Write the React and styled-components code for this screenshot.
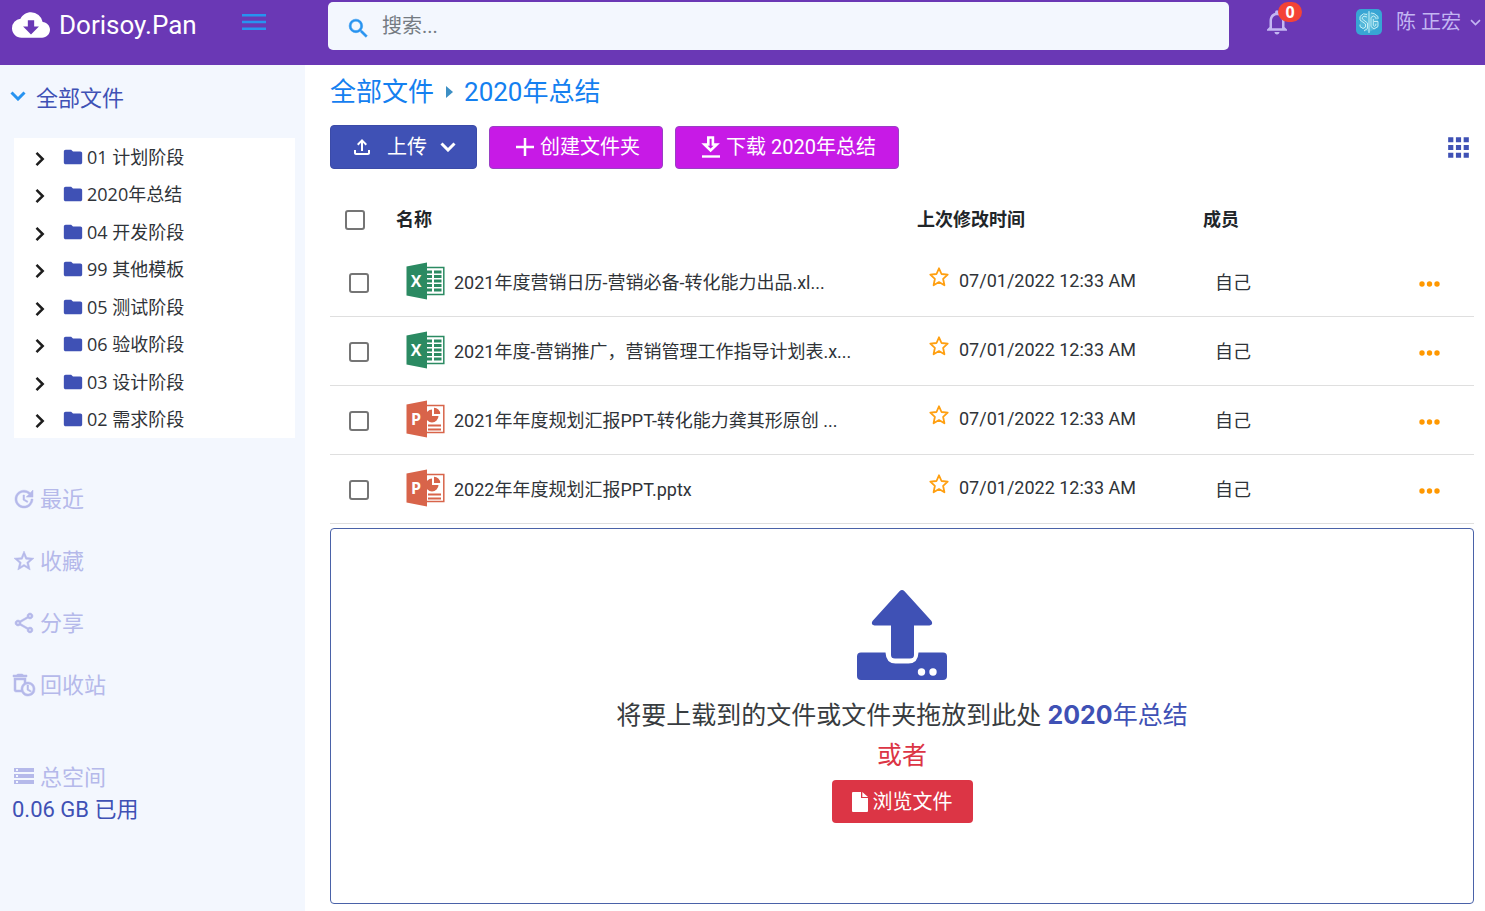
import React from 'react';
import styled, { createGlobalStyle } from 'styled-components';
import {
  MdCloudDownload,
  MdSearch,
  MdNotificationsNone,
  MdUpdate,
  MdStarBorder,
  MdOutlineShare,
  MdOutlineAutoDelete,
  MdStorage,
  MdApps,
  MdFolder,
  MdOutlineFileUpload,
} from 'react-icons/md';

const indigo = '#3f51b5';
const faded = '#b5b9ea';
const blue = '#2793f0';

const GlobalStyle = createGlobalStyle`
  *, *::before, *::after { box-sizing: border-box; }
  body {
    margin: 0;
    background: #fff;
    color: #2f3338;
    font-family: Roboto, "Noto Sans CJK SC", sans-serif;
    font-size: 18px;
  }
  button, input { font: inherit; color: inherit; }
  button { border: 0; background: none; padding: 0; cursor: pointer; }
  a { color: inherit; text-decoration: none; }
  ul, ol { list-style: none; margin: 0; padding: 0; }
  svg { display: block; flex: none; }
`;

const Page = styled.div`
  min-height: 100vh;
  display: flex;
  flex-direction: column;
`;

const Header = styled.header`
  height: 65px;
  display: flex;
  align-items: flex-start;
  background: #6a38b5;
`;

const BrandArea = styled.div`
  flex: none;
  width: 328px;
  height: 50px;
  padding: 0 62px 0 12px;
  display: flex;
  align-items: center;
  justify-content: space-between;
`;

const Brand = styled.a`
  display: flex;
  align-items: center;
  gap: 9px;
  color: #fff;
  font-size: 26px;
  line-height: 48px;
`;

const MenuButton = styled.button`
  color: ${blue};
  padding-bottom: 6px;
`;

const SearchBox = styled.label`
  flex: 1;
  min-width: 0;
  height: 48px;
  margin-top: 2px;
  padding: 0 18px;
  display: flex;
  align-items: center;
  gap: 9px;
  background: #f3f7fe;
  border-radius: 5px;
  color: ${blue};
  svg {
    margin-top: 4px;
    stroke: none;
  }
  path:not([fill='none']) {
    stroke: currentColor;
    stroke-width: 0.5px;
  }
`;

const SearchInput = styled.input`
  flex: 1;
  min-width: 0;
  height: 44px;
  border: 0;
  outline: 0;
  background: transparent;
  color: #333;
  font-size: 20px;
  &::placeholder { color: #757b82; opacity: 1; }
`;

const HeaderTools = styled.div`
  flex: none;
  width: 256px;
  height: 44px;
  padding: 0 4px 0 33px;
  display: flex;
  align-items: center;
  justify-content: space-between;
  color: #c3b6f2;
`;

const BellButton = styled.button`
  position: relative;
`;

const Badge = styled.span`
  position: absolute;
  top: -5px;
  left: 16px;
  width: 24px;
  height: 20px;
  border-radius: 10px;
  background: #f44336;
  color: #fff;
  font-family: "Open Sans", sans-serif;
  font-size: 16px;
  font-weight: 700;
  line-height: 20px;
  text-align: center;
`;

const UserButton = styled.button`
  display: flex;
  align-items: center;
  gap: 14px;
  font-size: 20px;
  line-height: 28px;
`;

const UserName = styled.span`
  display: flex;
  align-items: center;
  gap: 9px;
`;

const Body = styled.div`
  flex: 1;
  display: flex;
`;

const Sidebar = styled.aside`
  flex: none;
  width: 305px;
  background: #f3f7fe;
`;

const TreeTitle = styled.button`
  width: 100%;
  height: 61px;
  margin-bottom: 12px;
  padding-left: 10px;
  display: flex;
  align-items: center;
  gap: 10px;
  color: ${indigo};
  font-size: 22px;
  svg { color: ${blue}; }
`;

const Tree = styled.ul`
  min-height: 300px;
  margin: 0 10px 0 14px;
  display: grid;
  grid-auto-rows: 1fr;
  background: #fff;
`;

const TreeItem = styled.li`
  padding-left: 20px;
  display: flex;
  align-items: center;
  gap: 16px;
  font-family: "Open Sans", "Noto Sans CJK SC", sans-serif;
`;

const TreeToggle = styled.button`
  color: #1d1d1d;
  padding-top: 4px;
`;

const TreeLink = styled.a`
  display: flex;
  align-items: center;
  gap: 3px;
  line-height: 24px;
  svg { color: ${indigo}; }
`;

const SideNav = styled.nav`
  margin: 31px 0 44px;
`;

const SideLink = styled.a`
  height: ${(p) => p.$height}px;
  padding-left: 12px;
  display: flex;
  align-items: center;
  gap: 4px;
  color: ${faded};
  font-size: 22px;
  line-height: 32px;
  svg {
    margin-bottom: 3px;
    stroke: none;
  }
  path:not([fill='none']) {
    stroke: currentColor;
    stroke-width: ${(p) => (p.$solid ? 0 : '0.5px')};
  }
`;

const UsedSpace = styled.p`
  margin: 0;
  padding-left: 12px;
  color: ${indigo};
  font-size: 22px;
  line-height: 32px;
`;

const Main = styled.main`
  flex: 1;
  min-width: 0;
  padding: 7px 11px 7px 25px;
  display: flex;
  flex-direction: column;
`;

const Breadcrumb = styled.ol`
  display: flex;
  align-items: center;
  gap: 11px;
  color: #1480f0;
  font-size: 26px;
  line-height: 40px;
`;

const Toolbar = styled.div`
  height: 44px;
  margin: 13px 0 21px;
  display: flex;
  align-items: center;
  gap: 12px;
`;

const ToolButton = styled.button`
  height: ${(p) => (p.$primary ? 44 : 43)}px;
  padding: ${(p) => (p.$primary ? '0 20px 0 19px' : '0 22px 0 25px')};
  display: flex;
  align-items: center;
  gap: ${(p) => (p.$primary ? 13 : 5)}px;
  border: 1px solid ${(p) => (p.$primary ? '#3b4ba8' : '#9a3fc4')};
  border-radius: 4px;
  background: ${(p) => (p.$primary ? indigo : '#c71ae6')};
  color: #fff;
  font-size: 20px;
  line-height: 28px;
`;

const GridToggle = styled.button`
  margin-left: auto;
  color: ${indigo};
`;

const FileTable = styled.table`
  width: 100%;
  table-layout: fixed;
  border-collapse: separate;
  border-spacing: 0;
`;

const HeadCell = styled.th`
  width: ${(p) => p.$width || 'auto'};
  height: 58px;
  padding: 0 0 3px ${(p) => p.$indent || 0}px;
  text-align: left;
  font-weight: 700;
  color: #212529;
`;

const Cell = styled.td`
  height: 69px;
  padding: 0 0 3px ${(p) => p.$indent}px;
  border-bottom: 1px solid #dfdfdf;
`;

const Check = styled.input`
  appearance: none;
  display: block;
  width: 20px;
  height: 20px;
  margin: 5px 0 0;
  border: 2px solid #757575;
  border-radius: 3px;
  background: #fff;
`;

const CellLine = styled.div`
  display: flex;
  align-items: center;
  gap: ${(p) => p.$gap}px;
  white-space: nowrap;
  overflow: hidden;
`;

const StarButton = styled.button`
  padding-bottom: 8px;
  color: #ff9f10;
`;

const MoreButton = styled.button`
  display: block;
  padding-top: 7px;
  color: #ff9800;
`;

const DropZone = styled.section`
  flex: 1;
  margin-top: 4px;
  padding: 61px 16px 80px;
  display: flex;
  flex-direction: column;
  align-items: center;
  border: 1px solid #4a62a8;
  border-radius: 4px;
  font-size: 25px;
  line-height: 40px;
  text-align: center;
`;

const DropText = styled.p`
  margin: ${(p) => (p.$first ? '15px 0 0' : 0)};
  color: ${(p) => (p.$first ? '#383c40' : '#dc3545')};
`;

const FolderName = styled.span`
  color: ${indigo};
  b { font-family: Inter, sans-serif; }
`;

const BrowseButton = styled.button`
  height: 43px;
  margin-top: 4px;
  padding: 0 20px;
  display: flex;
  align-items: center;
  gap: 5px;
  border-radius: 4px;
  background: #dc3545;
  color: #fff;
  font-size: 20px;
  line-height: 28px;
`;

const Chevron = ({ width = 16, height = 10, stroke = 3 }) => (
  <svg width={width} height={height} viewBox="0 0 16 10" fill="none" stroke="currentColor" strokeWidth={stroke}>
    <path d="M1.500 1.500 8 8l6.500-6.500" />
  </svg>
);

const ChevronRight = () => (
  <svg width="12" height="16" viewBox="0 0 12 16" fill="none" stroke="currentColor" strokeWidth="2.500">
    <path d="m2.500 1.800 6.200 6.200-6.200 6.200" />
  </svg>
);

const MenuIcon = () => (
  <svg width="24" height="16" viewBox="0 0 24 16" fill="currentColor">
    <path d="M0 0h24v2.600H0zM0 6.700h24v2.600H0zM0 13.400h24V16H0z" />
  </svg>
);

const PlusIcon = () => (
  <svg width="20" height="20" viewBox="0 0 20 20" stroke="currentColor" strokeWidth="2.500">
    <path d="M10 1v18M1 10h18" />
  </svg>
);

const DownloadIcon = () => (
  <svg width="20" height="22" viewBox="0 0 20 22" fill="none" stroke="currentColor">
    <path strokeWidth="2.600" d="M7.300 1.500h4.600v7h3.800L9.600 14.500 3.500 8.500h3.800z" />
    <path strokeWidth="2.400" d="M1 20.500h18" />
  </svg>
);

const StarIcon = () => (
  <svg width="20" height="20" viewBox="0 0 20 20" fill="none" stroke="currentColor" strokeWidth="1.800" strokeLinejoin="round">
    <path d="m10 1.300 2.500 5.700 6.200.7-4.600 4.100 1.300 6.500-5.400-3.200-5.400 3.200 1.300-6.500L1.300 7.700l6.200-.7z" />
  </svg>
);

const DotsIcon = () => (
  <svg width="21" height="6" viewBox="0 0 21 6" fill="currentColor">
    <circle cx="3" cy="3" r="2.700" />
    <circle cx="10.500" cy="3" r="2.700" />
    <circle cx="18" cy="3" r="2.700" />
  </svg>
);

const FileIcon = () => (
  <svg width="16" height="20" viewBox="0 0 16 20" fill="currentColor">
    <path d="M1 0h8v6h7v13a1 1 0 0 1-1 1H1a1 1 0 0 1-1-1V1a1 1 0 0 1 1-1z" />
    <path d="M10.300 0 16 4.900h-5.700z" />
  </svg>
);

const UploadTrayIcon = () => (
  <svg width="90" height="90" viewBox="0 0 90 90" fill={indigo}>
    <path d="M42.500 1.200q2.500-2.400 5 0L74.500 31q2 4-2 4.500H57V65q0 3.500-4 3.500H38q-4 0-4-3.500V35.500H17.500q-4-.5-2-4.500z" />
    <path d="M4 62.500h24.500q.5 11 10 11h13q9.500 0 10-11H86a4 4 0 0 1 4 4V86a4 4 0 0 1-4 4H4a4 4 0 0 1-4-4V66.500a4 4 0 0 1 4-4z" />
    <circle cx="64.500" cy="82" r="3.700" fill="#fff" />
    <circle cx="76" cy="82" r="3.700" fill="#fff" />
  </svg>
);

const Avatar = () => (
  <svg width="26" height="26" viewBox="0 0 26 26" fill="none" stroke="#c4eef6" strokeWidth="1">
    <rect width="26" height="26" rx="5" fill="#38a5d4" stroke="none" />
    <path d="M13 3 22 7.500v11L13 23l-9-4.500v-11z" fill="#55b8da" stroke="none" />
    <path d="M13 2v22M11 5.500 7.500 4.800 4 7.500v3.500l5.500 4v3L7 19.500 4 17.500v-2M11 8 8 7.200 6.300 8.500v1.500l5.200 4v5.500L8 22M15 4l3 .5L22 7.500v2.500M20 10V8.500L17.500 7 15 8.500v9l3 2.500 4-2.500v-5h-4M17.300 10v6.500l1.200.8 1.300-1v-1.500" />
  </svg>
);

const OfficeIcon = ({ kind }) => {
  const excel = kind === 'xlsx';
  const color = excel ? '#2b8a62' : '#d8644a';
  return (
    <svg width="39" height="38" viewBox="0 0 39 38">
      <rect x="20" y="5.500" width="17.800" height="27" fill="#fff" stroke={color} strokeWidth="1.500" />
      {excel ? (
        <path
          fill={color}
          d="M21 8.500h5v3h-5zM28 8.500h7.500v3H28zM21 13h5v3h-5zM28 13h7.500v3H28zM21 17.500h5v3h-5zM28 17.500h7.500v3H28zM21 22h5v3h-5zM28 22h7.500v3H28zM21 26.500h5v3h-5zM28 26.500h7.500v3H28z"
        />
      ) : (
        <>
          <path fill={color} d="M26 9.500v6.500h6.500A6.500 6.500 0 1 1 26 9.500z" />
          <path fill={color} d="M28 7.800a6.200 6.200 0 0 1 6.200 6.200H28zM22 24.500h13v2H22zM22 28.500h13v2H22z" />
        </>
      )}
      <path fill={color} d="M.500 4.500 21 .5v37L.5 33.500z" />
      <text
        x="10"
        y="25"
        textAnchor="middle"
        fill="#fff"
        fontFamily="Open Sans, sans-serif"
        fontWeight="700"
        fontSize="16"
      >
        {excel ? 'X' : 'P'}
      </text>
    </svg>
  );
};

const folders = [
  '01 计划阶段',
  '2020年总结',
  '04 开发阶段',
  '99 其他模板',
  '05 测试阶段',
  '06 验收阶段',
  '03 设计阶段',
  '02 需求阶段',
];

const links = [
  { label: '最近', Icon: MdUpdate },
  { label: '收藏', Icon: MdStarBorder },
  { label: '分享', Icon: MdOutlineShare },
  { label: '回收站', Icon: MdOutlineAutoDelete },
];

const files = [
  { name: '2021年度营销日历-营销必备-转化能力出品.xl...', kind: 'xlsx' },
  { name: '2021年度-营销推广，营销管理工作指导计划表.x...', kind: 'xlsx' },
  { name: '2021年年度规划汇报PPT-转化能力龚其形原创 ...', kind: 'pptx' },
  { name: '2022年年度规划汇报PPT.pptx', kind: 'pptx' },
];

export default function App() {
  return (
    <Page>
      <GlobalStyle />
      <Header>
        <BrandArea>
          <Brand href="#">
            <MdCloudDownload size={38} />
            Dorisoy.Pan
          </Brand>
          <MenuButton aria-label="菜单">
            <MenuIcon />
          </MenuButton>
        </BrandArea>
        <SearchBox>
          <MdSearch size={25} />
          <SearchInput type="text" placeholder="搜索..." aria-label="搜索" />
        </SearchBox>
        <HeaderTools>
          <BellButton aria-label="通知">
            <MdNotificationsNone size={30} />
            <Badge>0</Badge>
          </BellButton>
          <UserButton>
            <Avatar />
            <UserName>
              陈 正宏
              <Chevron width={11} height={7} stroke={2.4} />
            </UserName>
          </UserButton>
        </HeaderTools>
      </Header>
      <Body>
        <Sidebar>
          <TreeTitle>
            <Chevron />
            全部文件
          </TreeTitle>
          <Tree>
            {folders.map((name) => (
              <TreeItem key={name}>
                <TreeToggle aria-label={`展开 ${name}`}>
                  <ChevronRight />
                </TreeToggle>
                <TreeLink href="#">
                  <MdFolder size={22} />
                  {name}
                </TreeLink>
              </TreeItem>
            ))}
          </Tree>
          <SideNav>
            {links.map(({ label, Icon }) => (
              <SideLink key={label} href="#" $height={62}>
                <Icon size={24} />
                {label}
              </SideLink>
            ))}
          </SideNav>
          <SideLink as="div" $height={33} $solid>
            <MdStorage size={24} />
            总空间
          </SideLink>
          <UsedSpace>0.06 GB 已用</UsedSpace>
        </Sidebar>
        <Main>
          <Breadcrumb>
            <li>
              <a href="#">全部文件</a>
            </li>
            <svg width="8" height="12" viewBox="0 0 8 12" fill="#3d8fc4">
              <path d="M1 0l7 6-7 6z" />
            </svg>
            <li>
              <a href="#">2020年总结</a>
            </li>
          </Breadcrumb>
          <Toolbar>
            <ToolButton $primary>
              <MdOutlineFileUpload size={24} />
              上传
              <Chevron />
            </ToolButton>
            <ToolButton>
              <PlusIcon />
              创建文件夹
            </ToolButton>
            <ToolButton>
              <DownloadIcon />
              下载 2020年总结
            </ToolButton>
            <GridToggle aria-label="网格视图">
              <MdApps size={31} />
            </GridToggle>
          </Toolbar>
          <FileTable>
            <thead>
              <tr>
                <HeadCell $width="66px" $indent={15}>
                  <Check type="checkbox" aria-label="全选" />
                </HeadCell>
                <HeadCell>名称</HeadCell>
                <HeadCell $width="286px">上次修改时间</HeadCell>
                <HeadCell $width="198px">成员</HeadCell>
                <HeadCell $width="73px" />
              </tr>
            </thead>
            <tbody>
              {files.map((file) => (
                <tr key={file.name}>
                  <Cell $indent={19}>
                    <Check type="checkbox" aria-label={file.name} />
                  </Cell>
                  <Cell $indent={10}>
                    <CellLine $gap={9}>
                      <OfficeIcon kind={file.kind} />
                      {file.name}
                    </CellLine>
                  </Cell>
                  <Cell $indent={12}>
                    <CellLine $gap={10}>
                      <StarButton aria-label="收藏">
                        <StarIcon />
                      </StarButton>
                      07/01/2022 12:33 AM
                    </CellLine>
                  </Cell>
                  <Cell $indent={12}>自己</Cell>
                  <Cell $indent={18}>
                    <MoreButton aria-label="更多">
                      <DotsIcon />
                    </MoreButton>
                  </Cell>
                </tr>
              ))}
            </tbody>
          </FileTable>
          <DropZone>
            <UploadTrayIcon />
            <DropText $first>
              将要上载到的文件或文件夹拖放到此处{' '}
              <FolderName>
                <b>2020</b>年总结
              </FolderName>
            </DropText>
            <DropText>或者</DropText>
            <BrowseButton>
              <FileIcon />
              浏览文件
            </BrowseButton>
          </DropZone>
        </Main>
      </Body>
    </Page>
  );
}
